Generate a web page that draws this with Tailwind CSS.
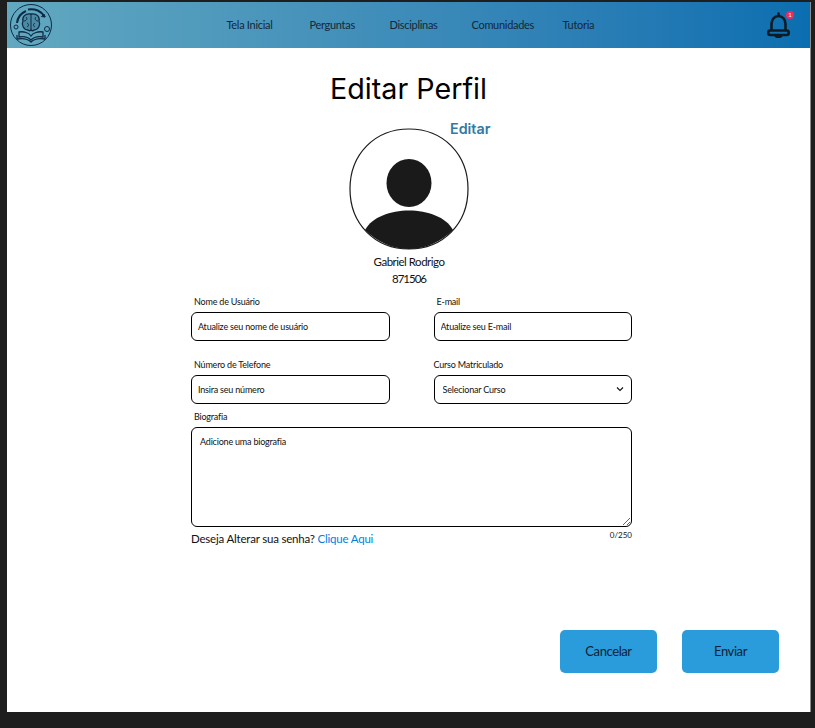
<!DOCTYPE html>
<html lang="pt-BR">
<head>
    <meta charset="UTF-8">
    <meta name="viewport" content="width=device-width, initial-scale=1.0">
    <title>Editar Perfil</title>
    <script src="https://cdn.jsdelivr.net/npm/@tailwindcss/browser@4"></script>
</head>
<body class="bg-[#1e1e1e] font-['Lato',sans-serif] text-[#111]">
    <div class="w-[815px] h-[728px] overflow-hidden pt-[2px] pl-[7px] pr-[4px] pb-[16px]">
        <div class="h-full bg-white border-r border-[#8a8a8a] flex flex-col">
            <!-- topo -->
            <header class="h-[46px] shrink-0 flex items-center justify-between pl-[2px] pr-[19px] bg-gradient-to-r from-[#62a8c0] to-[#0a6eb0]">
                <svg class="w-[44px] h-[44px]" viewBox="0 0 44 44" fill="none" stroke="#0d2b45">
                    <circle cx="22" cy="22" r="20.5" stroke-width="1"/>
                    <path d="M8 20 A15 15 0 0 1 17 8" stroke-width="2" />
                    <path d="M19 6.500 A16 16 0 0 1 36 14" stroke-width="2"/>
                    <path d="M36 14 l-3.500 -0.500 l2.500 -2.500 z" fill="#0d2b45" stroke-width="1"/>
                    <circle cx="38" cy="26" r="2.500" stroke-width="1"/>
                    <circle cx="7" cy="24" r="2" stroke-width="1"/>
                    <path d="M22 11 C16 10 13 14 14 18 C12 22 15 27 19 27 C20.500 28 21.500 28 22 27 C22.500 28 24 28 25 27 C29 27 32 22 30 18 C31 14 28 10 22 11 Z" fill="#4d8aa4" stroke-width="1.300"/>
                    <path d="M22 11 V27 M17 14 C19 16 17 18 15 18 M18 20 C20 21 20 23 18 24 M27 14 C25 16 27 18 29 18 M26 20 C24 21 24 23 26 24" stroke-width="1"/>
                    <path d="M10 29 C15 28 20 30 22 33 C24 30 29 28 34 29 V34 C29 33 25 34 22 37 C19 34 15 33 10 34 Z" stroke-width="1.300"/>
                    <path d="M8 32 V36 C14 35 19 36 22 39 C25 36 30 35 36 36 V32" stroke-width="1.300"/>
                </svg>
                <nav class="grid grid-cols-[83px_80px_82px_91px_33px] items-center ml-[2px] mt-[1px] text-[11px] tracking-[-0.3px] text-[#12283a]">
                    <a>Tela Inicial</a>
                    <a>Perguntas</a>
                    <a>Disciplinas</a>
                    <a>Comunidades</a>
                    <a>Tutoria</a>
                </nav>
                <div class="relative w-[24px] h-[26px] mt-[-1px]">
                    <svg class="w-[24px] h-[26px]" viewBox="0 0 24 26" fill="none" stroke="#0f1c26" stroke-width="2.600" stroke-linecap="round" stroke-linejoin="round">
                        <path d="M11.500 1.500 V4"/>
                        <path d="M4.500 18 V12 C4.500 7 8 4 11.500 4 C15 4 18.500 7 18.500 12 V18"/>
                        <rect x="1.300" y="18.500" width="20.400" height="4.500" rx="2"/>
                        <path d="M8.500 23.500 C9.500 25.500 13.500 25.500 14.500 23.500"/>
                    </svg>
                    <span class="absolute top-[-1px] right-[-3px] w-[8px] h-[8px] rounded-full bg-[#ee2b5b] text-white text-[6px] leading-[8px] text-center">1</span>
                </div>
            </header>

            <main class="flex-1 flex flex-col items-center relative">
                <h1 class="mt-[23px] font-['Inter',sans-serif] text-[28.700px] leading-[36px] text-black">Editar Perfil</h1>

                <!-- avatar -->
                <div class="relative mt-[21px] ml-[1px] w-[120px] h-[122px]">
                    <svg class="w-[120px] h-[122px]" viewBox="0 0 120 122" fill="none">
                        <path d="M60 1 C94 1 119 26 119 61 C119 96 94 121 60 121 C26 121 1 96 1 61 C1 26 26 1 60 1 Z" stroke="#1a1a1a" stroke-width="1.200"/>
                        <ellipse cx="60" cy="55" rx="22.500" ry="24" fill="#1a1a1a"/>
                        <path d="M16 102 C30 76 90 76 104 102 C92 114 76 121 60 121 C44 121 28 114 16 102 Z" fill="#1a1a1a"/>
                    </svg>
                    <a class="absolute left-[101px] top-[-10px] font-['Inter',sans-serif] font-semibold text-[14.300px] text-[#2f7ba6]">Editar</a>
                </div>
                <p class="mt-[3px] ml-[1px] text-[11.500px] tracking-[-0.5px] leading-[18px]">Gabriel Rodrigo</p>
                <p class="mt-[-1px] ml-[1px] text-[11.500px] tracking-[-1px] leading-[18px]">871506</p>

                <!-- formulario -->
                <form class="mt-[7px] ml-[6px] w-[441px] text-[9px] tracking-[-0.2px]">
                    <div class="grid grid-cols-2 gap-x-[44px]">
                        <div>
                            <label class="block ml-[3px] leading-[14px] mb-[3px]">Nome de Usuário</label>
                            <input class="w-full h-[29px] px-[6px] border border-black rounded-[6px] placeholder:text-[#111]" placeholder="Atualize seu nome de usuário">
                        </div>
                        <div>
                            <label class="block ml-[3px] leading-[14px] mb-[3px]">E-mail</label>
                            <input class="w-full h-[29px] px-[6px] border border-black rounded-[6px] placeholder:text-[#111]" placeholder="Atualize seu E-mail">
                        </div>
                        <div class="mt-[17px]">
                            <label class="block ml-[3px] leading-[14px] mb-[3px]">Número de Telefone</label>
                            <input class="w-full h-[29px] px-[6px] border border-black rounded-[6px] placeholder:text-[#111]" placeholder="Insira seu número">
                        </div>
                        <div class="mt-[17px]">
                            <label class="block leading-[14px] mb-[3px]">Curso Matriculado</label>
                            <div class="relative">
                                <select class="appearance-none w-full h-[29px] px-[8px] border border-black rounded-[6px] bg-white">
                                    <option>Selecionar Curso</option>
                                </select>
                                <svg class="absolute right-[8px] top-[11px] w-[8px] h-[6px]" viewBox="0 0 8 6" fill="none" stroke="#111" stroke-width="1.100"><path d="M1 1.500 L4 4.500 L7 1.500"/></svg>
                            </div>
                        </div>
                    </div>
                    <label class="block ml-[3px] mt-[6px] leading-[14px] mb-[3px]">Biografia</label>
                    <textarea class="block w-full h-[100px] px-[8px] py-[7px] border border-black rounded-[6px] placeholder:text-[#111]" placeholder="Adicione uma biografia"></textarea>
                    <div class="flex items-start justify-between mt-[3px]">
                        <p class="text-[11.500px] leading-[18px]">Deseja Alterar sua senha? <a class="text-[#0080e0]">Clique Aqui</a></p>
                        <span class="text-[8px] tracking-normal leading-[11px]">0/250</span>
                    </div>
                </form>

                <div class="absolute right-[31px] bottom-[39px] flex gap-[25px] text-[13px] tracking-[-0.4px]">
                    <button class="w-[97px] h-[43px] rounded-[5px] bg-[#2a9bdb] text-[#0d2233]">Cancelar</button>
                    <button class="w-[97px] h-[43px] rounded-[5px] bg-[#2a9bdb] text-[#0d2233]">Enviar</button>
                </div>
            </main>
        </div>
    </div>
</body>
</html>
